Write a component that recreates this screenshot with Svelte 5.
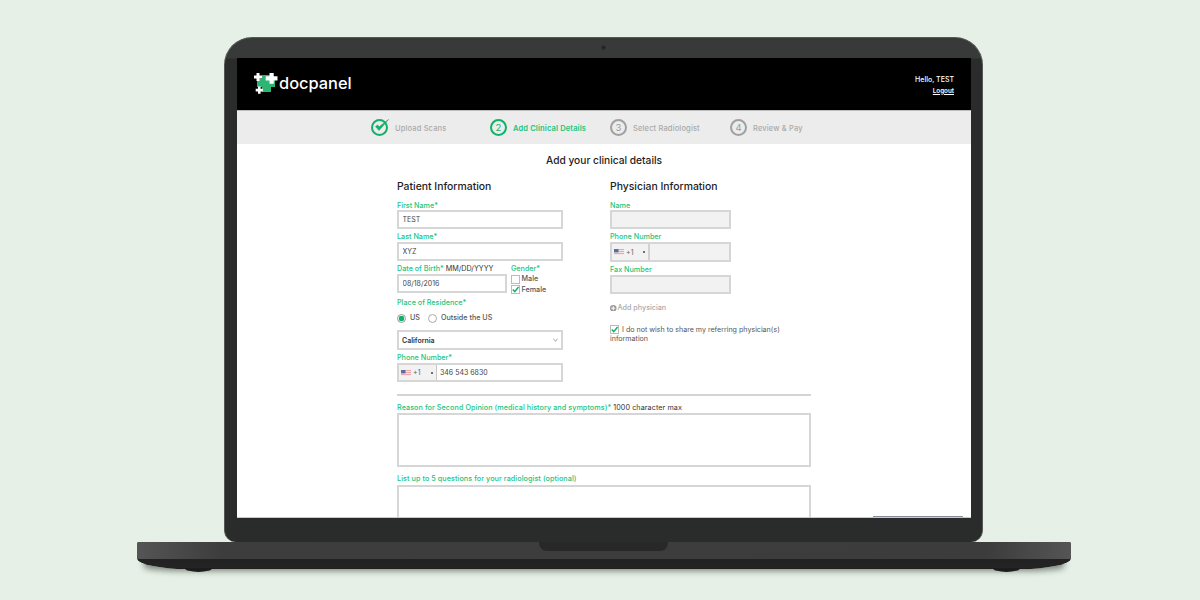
<script>
  const steps = [
    { n: '1', label: 'Upload Scans', state: 'done' },
    { n: '2', label: 'Add Clinical Details', state: 'active' },
    { n: '3', label: 'Select Radiologist', state: '' },
    { n: '4', label: 'Review & Pay', state: '' },
  ];
</script>

{#snippet flag()}
  <svg class="flag" viewBox="0 0 10 6" width="10" height="6">
    <rect width="10" height="6" fill="#e9a9ad" />
    <rect y="1" width="10" height="1" fill="#f3e6e6" />
    <rect y="3" width="10" height="1" fill="#f3e6e6" />
    <rect y="5" width="10" height="1" fill="#f3e6e6" />
    <rect width="4.5" height="3.4" fill="#5b6f9e" />
  </svg>
{/snippet}

{#snippet tick()}
  <svg viewBox="0 0 10 10" width="9" height="9">
    <path d="M2 5 L4.2 7.4 L8.4 2.2" fill="none" stroke="#12b06a" stroke-width="1.7" />
  </svg>
{/snippet}

<div class="stage">
  <div class="laptop">
    <div class="lid">
      <span class="camera"></span>
      <div class="screen">
        <header class="topbar">
          <div class="logo">
            <svg viewBox="0 0 26 24" width="26" height="24">
              <path d="M8 4h9v4h4v8h-4v5H8v-5H3V8h5z" fill="#2fb573" />
              <path d="M2.500 2h3v2.500H8v3H5.500V10h-3V7.500H0v-3h2.500z" fill="#fff" />
              <path d="M15.500 2h4.200v3.300h3.800v4.200h-3.800v3.300h-4.200V9.500h-3.800V5.300h3.800z" fill="#fff" />
              <path d="M4 15.500h2.600v2.300h2.300v2.600H6.600v2.300H4v-2.300H1.700v-2.600H4z" fill="#fff" />
            </svg>
            <span class="brand">docpanel</span>
          </div>
          <div class="user">
            <span>Hello, TEST</span>
            <a href="#logout">Logout</a>
          </div>
        </header>

        <nav class="stepper">
          {#each steps as s}
            <div class="step {s.state}">
              {#if s.state === 'done'}
                <svg class="check" viewBox="0 0 20 20" width="20" height="20">
                  <circle cx="9.500" cy="10.500" r="7.500" fill="none" stroke="#12b06a" stroke-width="2" />
                  <path d="M5.500 9.500 L9 13.500 L18.500 2.500 L9.200 9.800 L7.500 8z" fill="#12b06a" stroke="#12b06a" stroke-width="0.6" />
                </svg>
              {:else}
                <span class="circle">{s.n}</span>
              {/if}
              <span class="step-label">{s.label}</span>
            </div>
          {/each}
        </nav>

        <main class="content">
          <h1>Add your clinical details</h1>
          <div class="columns">
            <section class="col-left">
              <h2>Patient Information</h2>
              <label class="lbl" for="first">First Name*</label>
              <input id="first" class="box" value="TEST" />
              <label class="lbl" for="last">Last Name*</label>
              <input id="last" class="box" value="XYZ" />

              <div class="dob-row">
                <div class="dob">
                  <label class="lbl" for="dob">Date of Birth* <em>MM/DD/YYYY</em></label>
                  <input id="dob" class="box" value="08/18/2016" />
                </div>
                <div class="gender">
                  <span class="lbl">Gender*</span>
                  <span class="opt"><i class="cb"></i>Male</span>
                  <span class="opt"><i class="cb">{@render tick()}</i>Female</span>
                </div>
              </div>

              <span class="lbl place">Place of Residence*</span>
              <div class="radios">
                <span class="opt"><i class="radio on"></i>US</span>
                <span class="opt"><i class="radio"></i>Outside the US</span>
              </div>
              <div class="box select">
                <span>California</span>
                <svg viewBox="0 0 6 4" width="5" height="4"><path d="M.5 .8 L3 3.200 L5.500 .8" fill="none" stroke="#555" stroke-width=".8" /></svg>
              </div>
              <label class="lbl" for="phone">Phone Number*</label>
              <div class="box phone">
                <span class="dial">{@render flag()}<b>+1</b><i class="dot"></i></span>
                <input id="phone" value="346 543 6830" />
              </div>
            </section>

            <section class="col-right">
              <h2>Physician Information</h2>
              <label class="lbl" for="ph-name">Name</label>
              <input id="ph-name" class="box off" />
              <label class="lbl" for="ph-phone">Phone Number</label>
              <div class="box phone off">
                <span class="dial">{@render flag()}<b>+1</b><i class="dot"></i></span>
                <input id="ph-phone" />
              </div>
              <label class="lbl" for="ph-fax">Fax Number</label>
              <input id="ph-fax" class="box off" />
              <div class="add">
                <svg viewBox="0 0 10 10" width="6.500" height="6.500">
                  <circle cx="5" cy="5" r="5" fill="#999" />
                  <path d="M5 2v6M2 5h6" stroke="#fff" stroke-width="1.600" />
                </svg>
                Add physician
              </div>
              <div class="share">
                <i class="cb">{@render tick()}</i>I do not wish to share my referring physician(s) information
              </div>
            </section>
          </div>

          <hr />

          <label class="lbl wide" for="reason">Reason for Second Opinion (medical history and symptoms)* <em>1000 character max</em></label>
          <textarea id="reason" class="area"></textarea>
          <label class="lbl wide second" for="questions">List up to 5 questions for your radiologist (optional)</label>
          <textarea id="questions" class="area"></textarea>
        </main>
        <span class="widget"></span>
      </div>
    </div>
    <div class="base">
      <span class="notch"></span>
      <span class="foot left"></span>
      <span class="foot right"></span>
    </div>
  </div>
</div>

<style>
  :global(body) {
    margin: 0;
    background: #e6f0e7;
  }

  .stage {
    height: 600px;
    overflow: hidden;
    padding-top: 37px;
    box-sizing: border-box;
    font-family: Inter, "Open Sans", sans-serif;
  }

  .laptop {
    width: 934px;
    margin-left: 137px;
    display: flex;
    flex-direction: column;
    align-items: center;
  }

  .lid {
    position: relative;
    box-sizing: border-box;
    width: 759px;
    height: 505px;
    margin-left: -1px;
    padding: 20px 11px 0 12px;
    background: linear-gradient(#383a39 0, #383a39 20px, #2a2c2b 21px);
    border: 1px solid #565857;
    border-bottom: none;
    border-radius: 28px 28px 12px 12px / 28px 28px 12px 12px;
  }

  .camera {
    position: absolute;
    top: 6.500px;
    left: 375.500px;
    width: 3px;
    height: 3px;
    border-radius: 50%;
    background: #222;
    border: 1px solid #2f3130;
  }

  .screen {
    position: relative;
    height: 460px;
    overflow: hidden;
    background: #fff;
    border-bottom: 1px solid #c8c8c8;
    box-sizing: border-box;
  }

  .topbar {
    height: 52px;
    background: #000;
    border-bottom: 1px solid #bdbdbd;
    display: flex;
    align-items: center;
    justify-content: space-between;
    padding: 0 17px;
  }

  .logo {
    display: flex;
    align-items: center;
    color: #fff;
    margin-top: -3px;
  }

  .brand {
    font-size: 16.400px;
    font-weight: 500;
    margin-left: -1px;
  }

  .user {
    display: flex;
    flex-direction: column;
    align-items: flex-end;
    gap: 3px;
    margin-top: 1px;
    color: #fff;
    font-size: 7px;
    font-weight: 500;
  }

  .user a {
    color: #fff;
    font-size: 6.300px;
    font-weight: 600;
  }

  .stepper {
    height: 33px;
    background: #ececec;
    display: grid;
    grid-template-columns: repeat(4, 120px);
    padding-left: 133px;
    align-items: center;
  }

  .step {
    display: flex;
    align-items: center;
    gap: 6px;
    font-size: 7.500px;
    letter-spacing: 0.15px;
    color: #aaa;
    font-weight: 500;
  }

  .step-label {
    margin-top: 2px;
  }

  .step.active {
    color: #22c47e;
    font-weight: 600;
  }

  .check {
    margin-top: -2px;
    margin-right: -1px;
  }

  .circle {
    box-sizing: border-box;
    width: 17px;
    height: 17px;
    border-radius: 50%;
    border: 2px solid #a0a0a0;
    color: #9b9b9b;
    display: flex;
    align-items: center;
    justify-content: center;
    font-size: 9.500px;
    font-weight: 400;
    letter-spacing: 0;
  }

  .active .circle {
    border-color: #12b06a;
    color: #12b06a;
  }

  .content {
    width: 414px;
    margin: 0 auto;
    display: flex;
    flex-direction: column;
  }

  h1 {
    margin: 10px 0 0;
    font-size: 10.200px;
    line-height: 13px;
    font-weight: 500;
    color: #222;
    text-align: center;
  }

  h2 {
    margin: 13px 0 6px;
    font-size: 10.400px;
    line-height: 13px;
    font-weight: 500;
    color: #222;
  }

  .columns {
    display: flex;
    gap: 47px;
    height: 227px;
    flex: none;
  }

  .col-left,
  .col-right {
    display: flex;
    flex-direction: column;
  }

  .col-left {
    width: 166px;
  }

  .col-right {
    width: 200px;
  }

  .lbl {
    display: block;
    flex: none;
    font-size: 7.200px;
    line-height: 11px;
    height: 11px;
    font-weight: 500;
    color: #22c47e;
    white-space: nowrap;
  }

  h2 + .lbl {
    margin-top: 2px;
    height: 9px;
    line-height: 9px;
  }

  .lbl em {
    font-style: normal;
    font-weight: 400;
    color: #333;
  }

  .box {
    box-sizing: border-box;
    flex: none;
    width: 166px;
    height: 19px;
    margin: 0 0 2px;
    padding: 0 3.500px;
    border: 2px solid #d6d6d6;
    background: #fff;
    border-radius: 0;
    font-family: inherit;
    font-size: 7px;
    color: #444;
    outline: none;
  }

  .col-right .box {
    width: 121px;
    background: #f2f2f2;
  }

  .col-right .phone {
    height: 20px;
  }

  .dob-row {
    display: flex;
    gap: 4px;
    flex: none;
  }

  .dob .box {
    display: block;
    width: 110px;
    margin: 0;
  }

  .gender {
    display: flex;
    flex-direction: column;
  }

  .opt {
    display: flex;
    align-items: center;
    gap: 1.500px;
    font-size: 7.200px;
    line-height: 10.500px;
    font-weight: 500;
    color: #555;
  }

  .cb {
    box-sizing: border-box;
    width: 9px;
    height: 9px;
    flex: none;
    border: 1px solid #bbb;
    background: #fff;
    display: flex;
    align-items: center;
    justify-content: center;
  }

  .cb svg {
    flex: none;
  }

  .place {
    margin-top: 2px;
  }

  .radios {
    display: flex;
    flex: none;
    gap: 8px;
    margin: 3px 0 5px;
    height: 14px;
    align-items: center;
  }

  .radios .opt {
    gap: 4px;
  }

  .radio {
    box-sizing: border-box;
    width: 9px;
    height: 9px;
    border-radius: 50%;
    border: 1px solid #aaa;
    background: #fff;
  }

  .radio.on {
    border-color: #999;
    background: radial-gradient(circle, #12b06a 0, #12b06a 2.600px, #fff 3.100px);
  }

  .select {
    display: flex;
    align-items: center;
    justify-content: space-between;
    padding: 0 3px;
    font-weight: 600;
    color: #333;
    height: 20px;
    margin-bottom: 2px;
  }

  .phone {
    display: flex;
    padding: 0;
    margin-bottom: 2px;
  }

  .dial {
    width: 38px;
    flex: none;
    display: flex;
    align-items: center;
    gap: 2px;
    padding-left: 2px;
    box-sizing: border-box;
    background: #f2f2f2;
    border-right: 1px solid #c9c9c9;
    position: relative;
    color: #666;
  }

  .col-right .dial {
    border-right-width: 2px;
    border-right-color: #d2d2d2;
  }

  .dial b {
    font-weight: 400;
  }

  .dot {
    position: absolute;
    right: 3px;
    top: 7px;
    width: 2px;
    height: 2px;
    background: #444;
    border-radius: 1px;
  }

  .phone input {
    flex: 1;
    min-width: 0;
    border: none;
    background: transparent;
    padding: 0 3px;
    font: inherit;
    color: #444;
    outline: none;
  }

  .add {
    margin-top: 7px;
    display: flex;
    align-items: center;
    gap: 1px;
    font-size: 7.200px;
    line-height: 10px;
    color: #aaa;
    font-weight: 500;
  }

  .share {
    margin-top: 12px;
    width: 190px;
    font-size: 7.100px;
    line-height: 9px;
    color: #555;
  }

  .share .cb {
    display: inline-flex;
    vertical-align: -2px;
    margin-right: 3px;
  }

  hr {
    width: 100%;
    margin: 0;
    flex: none;
    border: none;
    border-top: 2px solid #d4d4d4;
  }

  .wide {
    margin-top: 6px;
    letter-spacing: 0.08px;
  }

  .second {
    margin-top: 6px;
    margin-bottom: 1px;
  }

  .area {
    display: block;
    box-sizing: border-box;
    width: 100%;
    height: 54px;
    margin: 0;
    flex: none;
    border: 2px solid #d6d6d6;
    resize: none;
    outline: none;
  }

  .widget {
    position: absolute;
    left: 636px;
    bottom: 0;
    width: 90px;
    height: 1px;
    background: #39415c;
    opacity: 0.6;
  }

  .base {
    position: relative;
    width: 100%;
    height: 27px;
    flex: none;
    box-sizing: border-box;
    background: linear-gradient(#3a3b3a 0, #3a3b3a 16px, #222 17px, #242424 26px, #1c1c1c 27px);
    border-radius: 2px 2px 0 0 / 2px 2px 0 0;
    border-bottom-left-radius: 50px 11px;
    border-bottom-right-radius: 50px 11px;
    box-shadow: 0 9px 6px -7px rgba(50, 60, 50, 0.6);
  }

  .base::before {
    content: '';
    position: absolute;
    inset: 0 0 10px;
    background: linear-gradient(90deg, #555 0, #3d3d3d 9%, #3c3c3c 91%, #555 100%);
    border-radius: 2px 2px 0 0;
  }

  .notch {
    position: absolute;
    top: 0;
    left: 402px;
    width: 129px;
    height: 9px;
    background: #282828;
    border-radius: 0 0 8px 8px;
  }

  .foot {
    position: absolute;
    bottom: -3px;
    width: 27px;
    height: 4px;
    background: #1c1c1c;
    border-radius: 0 0 14px 14px / 0 0 4px 4px;
  }

  .foot.left {
    left: 48px;
  }

  .foot.right {
    right: 51px;
  }
</style>
